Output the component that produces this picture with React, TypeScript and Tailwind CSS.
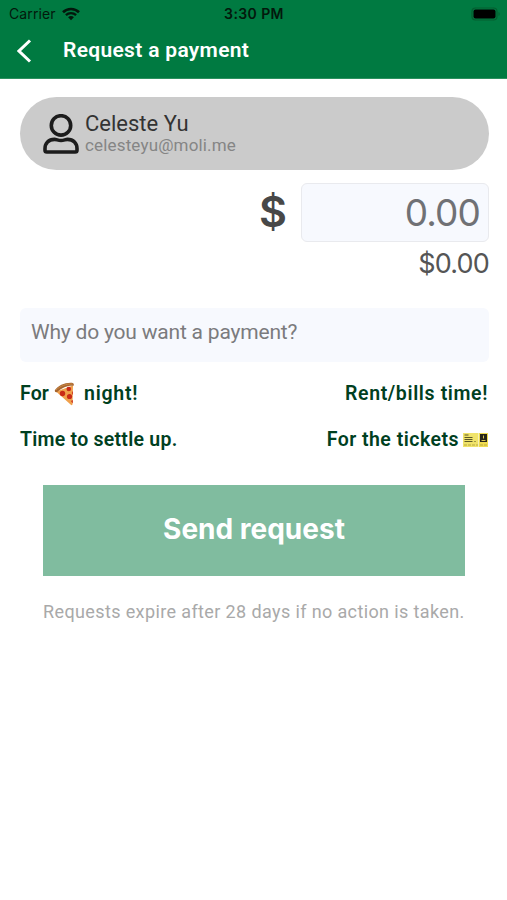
import React from "react";

const WifiIcon = () => (
  <svg width="18" height="14" viewBox="0 0 18 14" fill="none">
    <path d="M1 5.2C5.4 .9 12.6 .9 17 5.2" stroke="#03180c" strokeWidth="2.6" />
    <path d="M3.9 8.1C6.7 5.4 11.3 5.4 14.1 8.1" stroke="#03180c" strokeWidth="2.3" />
    <path d="M6.1 10.2C7.7 8.7 10.3 8.7 11.9 10.2L9 13.2Z" fill="#03180c" />
  </svg>
);

const BatteryIcon = () => (
  <svg width="30" height="14" viewBox="0 0 30 14" fill="none">
    <rect x="1" y="1" width="25" height="12" rx="3.5" stroke="#045e30" strokeWidth="1.2" />
    <rect x="2.5" y="2.5" width="22" height="9" rx="2" fill="#000" />
    <path d="M27.5 5v4c1.6-.6 1.6-3.4 0-4Z" fill="#045e30" />
  </svg>
);

const UserIcon = () => (
  <svg width="36" height="40" viewBox="0 0 36 40" fill="none" stroke="#1c1c1c" strokeWidth="3.6" strokeLinejoin="round">
    <circle cx="18" cy="11.4" r="9.7" />
    <path d="M11.5 25.4C5.5 25.4 2 29.5 2 34.5V36.2C2 37.3 2.7 38 3.8 38H32.2C33.3 38 34 37.3 34 36.2V34.5C34 29.5 30.5 25.4 24.5 25.4C22.3 25.4 21 26.5 18 26.5S13.7 25.4 11.5 25.4Z" />
  </svg>
);

const PizzaIcon = () => (
  <svg width="22" height="24" viewBox="0 0 22 24">
    <path d="M2 9.5L19 3.5L18.5 22.5Q17.5 24 16 22Z" fill="#f0a04b" />
    <path d="M.8 8.2C4 3.5 11 .3 18 .8Q20.5 1.3 19.6 3.8C13 3.4 7.5 6 3.2 10Q.5 10.8 .8 8.2Z" fill="#a7652e" />
    <path d="M2 8C6 4 12 1.7 18.5 2" stroke="#c98a46" fill="none" />
    <circle cx="8.5" cy="11.5" r="2.7" fill="#c92a17" />
    <circle cx="14.8" cy="7" r="2.3" fill="#c92a17" />
    <circle cx="15.5" cy="14.5" r="2.6" fill="#c92a17" />
    <path d="M18.8 9v4q-2-2 0-4ZM17 19l1.8-1v3.5Z" fill="#c92a17" />
  </svg>
);

const TicketIcon = () => (
  <svg width="25" height="14" viewBox="0 0 25 14">
    <rect width="15.5" height="14" fill="#f0e36a" />
    <rect x="16" width="9" height="14" fill="#f0dc50" />
    <path d="M1.5 2h4M1.5 4.5h8M1.5 6.5h8M1.5 8.5h8" stroke="#5b5828" />
    <path d="M11 8.5h2" stroke="#a09a48" />
    <path d="M1 12h14M17 12h7" stroke="#b8a93e" strokeDasharray="3 1" />
    <rect x="17" y="1" width="7" height="8" fill="#272519" />
    <path d="M20.5 2.5v3M18.5 7.5h4" stroke="#d8c553" />
  </svg>
);

const Header = () => (
  <header className="h-[79px] bg-[#007a41] border-b border-b-[#2c915f]">
    <div className="h-[27px] grid grid-cols-3 items-center pl-[9px] pr-[6px] font-['Inter',sans-serif] text-[14px] text-[#03180c]">
      <div className="flex items-center gap-[6px]">
        <span className="tracking-[0.1px]">Carrier</span>
        <WifiIcon />
      </div>
      <p className="pr-[2px] text-center font-semibold tracking-[0.4px]">3:30 PM</p>
      <div className="flex justify-end">
        <BatteryIcon />
      </div>
    </div>
    <div className="h-[48px] flex items-center pl-[17px] text-white">
      <svg width="15" height="24" viewBox="0 0 15 24" fill="none" stroke="currentColor" strokeWidth="3">
        <path d="M13 1.5L2 12L13 22.5" />
      </svg>
      <h1 className="pl-[31px] text-[21px] font-semibold tracking-[0.32px]">Request a payment</h1>
    </div>
  </header>
);

const Recipient = () => (
  <div className="h-[73px] flex items-center rounded-full bg-[#cbcbcb] pl-[23px]">
    <UserIcon />
    <div className="pl-[6px] pb-[3px]">
      <p className="text-[22px] leading-[25px] text-[#333]">Celeste Yu</p>
      <p className="text-[17px] leading-[18px] tracking-[0.16px] text-[#858585]">celesteyu@moli.me</p>
    </div>
  </div>
);

const Amount = () => (
  <div className="mt-[13px] flex flex-col items-end font-['Inter',sans-serif]">
    <div className="flex items-center">
      <span className="pr-[14px] pb-[3px] text-[43px] leading-[56px] font-semibold text-[#484848]">$</span>
      <div className="w-[188px] h-[59px] flex items-center justify-end rounded-md border border-[#e9eaee] bg-[#f7f9fe] pr-[8px]">
        <span className="text-[37px] tracking-[-0.9px] text-[#707175]">0.00</span>
      </div>
    </div>
    <p className="mt-[4px] text-[27px] leading-[36px] tracking-[-0.8px] text-[#555]">$0.00</p>
  </div>
);

const Suggestions = () => (
  <div className="mt-[9px] pr-px grid grid-cols-2 text-[19.5px] leading-[46px] font-semibold text-[#00401f]">
    <p className="flex items-center whitespace-pre">
      <span className="tracking-[0.15px]">For </span>
      <PizzaIcon />
      <span className="pl-2 tracking-[0.75px]">night!</span>
    </p>
    <p className="text-right tracking-[0.62px]">Rent/bills time!</p>
    <p className="tracking-[0.25px]">Time to settle up.</p>
    <p className="flex items-center justify-end gap-[4px] whitespace-nowrap">
      <span className="tracking-[0.48px]">For the tickets</span>
      <TicketIcon />
    </p>
  </div>
);

const App = () => {
  return (
    <div className="h-[900px] w-full overflow-hidden bg-white font-['Roboto',sans-serif]">
      <Header />
      <main className="pt-[18px] pl-[20px] pr-[18px]">
        <Recipient />
        <Amount />
        <div className="mt-[26px] h-[54px] rounded-md bg-[#f7f9fe] pl-[11px] pt-[9px] text-[21px] leading-[30px] tracking-[-0.2px] text-[#7b7b7d]">
          Why do you want a payment?
        </div>
        <Suggestions />
        <div className="pl-[23px] pr-[24px]">
          <button className="mt-[22px] h-[91px] w-full bg-[#80bc9f] pb-[4px] font-['Inter',sans-serif] text-[28px] font-bold text-white">
            Send request
          </button>
          <p className="mt-[23px] whitespace-nowrap text-[18px] leading-[26px] tracking-[0.38px] text-[#a9a9a9]">
            Requests expire after 28 days if no action is taken.
          </p>
        </div>
      </main>
    </div>
  );
};

export default App;
